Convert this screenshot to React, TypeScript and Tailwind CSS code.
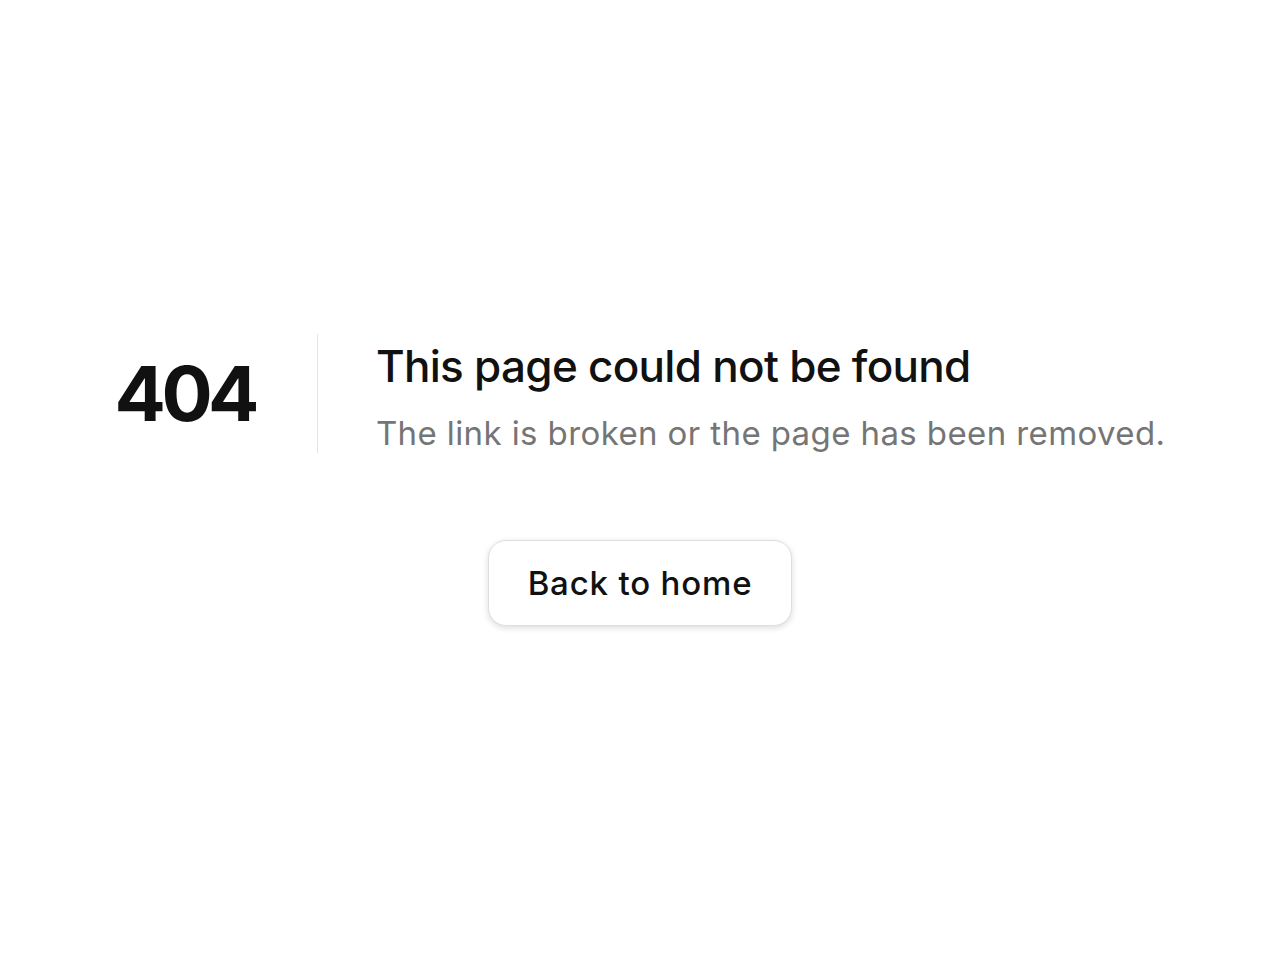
import React from "react";

const NotFound: React.FC = () => {
    return (
        <div
            className="min-h-screen w-full bg-white flex flex-col items-center justify-center text-[#111]"
            style={{ fontFamily: "Inter, 'Liberation Sans', sans-serif" }}
        >
            {/* Code + message */}
            <div className="flex items-center">
                <h1 className="text-[76px] font-bold leading-none tracking-[-0.06em] pr-[62px]">404</h1>
                <div className="flex flex-col gap-[24px] border-l border-[#e5e5e5] pl-[58px] pt-[8px]">
                    <h2 className="text-[44px] font-medium leading-[1.1] tracking-[-0.016em]">
                        This page could not be found
                    </h2>
                    <p className="text-[33px] text-[#757575] leading-[1.2] tracking-[0.012em]">
                        The link is broken or the page has been removed.
                    </p>
                </div>
            </div>

            {/* Back button */}
            <a
                href="#"
                className="mt-[87px] inline-flex items-center justify-center w-[304px] h-[86px] rounded-[18px] border border-[#dedede] bg-white shadow-[0_2px_6px_rgba(0,0,0,0.14)] text-[33px] font-medium tracking-[0.025em]"
            >
                Back to home
            </a>
        </div>
    );
};

export default function App() {
    return <NotFound />;
}
